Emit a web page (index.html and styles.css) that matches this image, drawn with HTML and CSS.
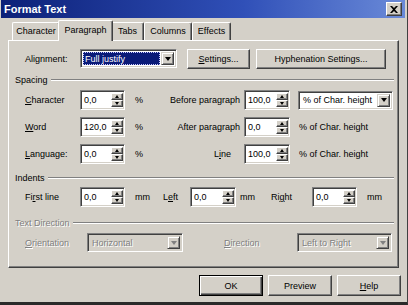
FILE: index.html
```html
<!DOCTYPE html>
<html>
<head>
<meta charset="utf-8">
<link rel="stylesheet" href="styles.css">
</head>
<body>
<div class="dialog">
  <div class="titlebar">
    <span class="title">Format Text</span>
    <span class="close"><svg width="8" height="7" viewBox="0 0 8 7"><path d="M0 0h2l2 2 2-2h2L5 3.5 8 7H6L4 5 2 7H0l3-3.5z" fill="#000"/></svg></span>
  </div>
  <div class="tabs">
    <div class="tab w-char">Character</div>
    <div class="tab active w-para">Paragraph</div>
    <div class="tab w-tabs">Tabs</div>
    <div class="tab w-cols">Columns</div>
    <div class="tab w-eff">Effects</div>
  </div>
  <div class="panel">
    <div class="row align-row">
      <span class="lbl c-label">Ali<u>g</u>nment:</span>
      <div class="combo w-align">
        <span class="combo-text selected"><span>Full justify</span></span>
        <span class="arrow-btn"><span class="tri"></span></span>
      </div>
      <button class="btn w-settings"><u>S</u>ettings...</button>
      <button class="btn w-hyph">Hyphenation Settings...</button>
    </div>

    <div class="group-head"><span>Spacing</span><span class="etch"></span></div>

    <div class="row spacing-row first">
      <span class="lbl c-label"><u>C</u>haracter</span>
      <div class="spin w45"><span class="spin-text">0,0</span><span class="spin-btns"><span class="sb"><span class="up"></span></span><span class="sb"><span class="down"></span></span></span></div>
      <span class="lbl c-unit">%</span>
      <span class="lbl c-label2">Before paragraph</span>
      <div class="spin w46"><span class="spin-text">100,0</span><span class="spin-btns"><span class="sb"><span class="up"></span></span><span class="sb"><span class="down"></span></span></span></div>
      <div class="combo w-unit gap8">
        <span class="combo-text">% of Char. height</span>
        <span class="arrow-btn"><span class="tri"></span></span>
      </div>
    </div>

    <div class="row spacing-row">
      <span class="lbl c-label"><u>W</u>ord</span>
      <div class="spin w45"><span class="spin-text">120,0</span><span class="spin-btns"><span class="sb"><span class="up"></span></span><span class="sb"><span class="down"></span></span></span></div>
      <span class="lbl c-unit">%</span>
      <span class="lbl c-label2">After paragraph</span>
      <div class="spin w46"><span class="spin-text">0,0</span><span class="spin-btns"><span class="sb"><span class="up"></span></span><span class="sb"><span class="down"></span></span></span></div>
      <span class="lbl c-unittext">% of Char. height</span>
    </div>

    <div class="row spacing-row">
      <span class="lbl c-label"><u>L</u>anguage:</span>
      <div class="spin w45"><span class="spin-text">0,0</span><span class="spin-btns"><span class="sb"><span class="up"></span></span><span class="sb"><span class="down"></span></span></span></div>
      <span class="lbl c-unit">%</span>
      <span class="lbl c-label2 line-lbl">L<u>i</u>ne</span>
      <div class="spin w46"><span class="spin-text">100,0</span><span class="spin-btns"><span class="sb"><span class="up"></span></span><span class="sb"><span class="down"></span></span></span></div>
      <span class="lbl c-unittext">% of Char. height</span>
    </div>

    <div class="group-head indents-head"><span>Indents</span><span class="etch"></span></div>

    <div class="row indent-row">
      <span class="lbl c-label">Fi<u>r</u>st line</span>
      <div class="spin w45"><span class="spin-text">0,0</span><span class="spin-btns"><span class="sb"><span class="up"></span></span><span class="sb"><span class="down"></span></span></span></div>
      <span class="lbl i-mm1">mm</span>
      <span class="lbl i-left">L<u>e</u>ft</span>
      <div class="spin w46"><span class="spin-text">0,0</span><span class="spin-btns"><span class="sb"><span class="up"></span></span><span class="sb"><span class="down"></span></span></span></div>
      <span class="lbl i-mm2">mm</span>
      <span class="lbl i-right">Ri<u>g</u>ht</span>
      <div class="spin w45"><span class="spin-text">0,0</span><span class="spin-btns"><span class="sb"><span class="up"></span></span><span class="sb"><span class="down"></span></span></span></div>
      <span class="lbl i-mm3">mm</span>
    </div>

    <div class="group-head td-head disabled"><span>Text Direction</span><span class="etch"></span></div>

    <div class="row orient-row">
      <span class="lbl o-label disabled"><u>O</u>rientation</span>
      <div class="combo dis w-orient">
        <span class="combo-text disabled">Horizontal</span>
        <span class="arrow-btn"><span class="tri dis-tri"></span></span>
      </div>
      <span class="lbl o-dir disabled"><u>D</u>irection</span>
      <div class="combo dis w-unit">
        <span class="combo-text disabled">Left to Right</span>
        <span class="arrow-btn"><span class="tri dis-tri"></span></span>
      </div>
    </div>
  </div>
  <div class="buttons">
    <button class="btn dlg default">OK</button>
    <button class="btn dlg">Preview</button>
    <button class="btn dlg"><u>H</u>elp</button>
  </div>
</div>
</body>
</html>
```

FILE: styles.css
```css
* { box-sizing: border-box; }

html, body {
  margin: 0;
  padding: 0;
}

body {
  width: 408px;
  height: 305px;
  overflow: hidden;
  background: #d4d0c8;
  font-family: "Liberation Sans", Arial, sans-serif;
  font-size: 9px;
  color: #000;
}

u { text-decoration: underline; text-underline-offset: 1px; }

.dialog {
  width: 408px;
  height: 305px;
  background: #d4d0c8;
  padding: 0 2px 0 1px;
  border-right: 1px solid #404040;
  border-bottom: 3px solid #2a2a2a;
  display: flex;
  flex-direction: column;
}

.titlebar {
  height: 18px;
  flex: none;
  background: linear-gradient(to right, #0c2078, #3050b8 60%, #6a8ad8);
  display: flex;
  align-items: center;
  justify-content: space-between;
  padding: 0 3px 0 3px;
}

.title {
  color: #fff;
  font-weight: bold;
  font-size: 11px;
}

.close {
  width: 16px;
  height: 14px;
  background: #d4d0c8;
  border: 1px solid;
  border-color: #fff #404040 #404040 #fff;
  box-shadow: inset -1px -1px #808080;
  display: flex;
  align-items: center;
  justify-content: center;
}

.tabs {
  display: flex;
  align-items: flex-end;
  height: 20px;
  margin-top: 2px;
  padding-left: 11px;
  flex: none;
}

.tab {
  height: 18px;
  line-height: 16px;
  text-align: center;
  border-top: 1px solid #fff;
  border-left: 1px solid #fff;
  border-right: 1px solid #404040;
  box-shadow: inset -1px 0 #808080;
  border-radius: 2px 2px 0 0;
  background: #d4d0c8;
  white-space: nowrap;
}

.tab.active {
  height: 21px;
  margin: 0 -2px -1px -2px;
  line-height: 18px;
  position: relative;
  z-index: 1;
}

.w-char { width: 48px; }
.w-para { width: 55px; }
.w-tabs { width: 33px; }
.w-cols { width: 48px; }
.w-eff { width: 39px; }

.panel {
  flex: none;
  margin-left: 7px;
  width: 391px;
  height: 228px;
  border: 1px solid;
  border-color: #fff #404040 #404040 #fff;
  box-shadow: inset -1px -1px #808080;
  display: flex;
  flex-direction: column;
  padding-left: 16px;
}

.row {
  display: flex;
  align-items: center;
  height: 20px;
  flex: none;
}

.lbl { white-space: nowrap; flex: none; }

.align-row { margin-top: 8px; height: 19px; }
.c-label { width: 55px; }

.combo {
  flex: none;
  height: 19px;
  display: flex;
  align-items: stretch;
  background: #fff;
  border: 1px solid;
  border-color: #808080 #fff #fff #808080;
  box-shadow: inset 1px 1px #404040, inset -1px -1px #d4d0c8;
  padding: 2px;
}

.combo.dis { background: #d4d0c8; }

.combo-text {
  flex: 1;
  display: flex;
  align-items: center;
  padding-left: 2px;
  white-space: nowrap;
  overflow: hidden;
}

.combo-text.selected {
  padding: 0 1px 0 0;
}

.combo-text.selected span {
  flex: 1;
  height: 100%;
  background: #0a1a78;
  color: #fff;
  display: flex;
  align-items: center;
  padding-left: 2px;
  outline: 1px dotted #c8c8ff;
  outline-offset: -1px;
}

.arrow-btn {
  flex: none;
  width: 13px;
  background: #d4d0c8;
  border: 1px solid;
  border-color: #d4d0c8 #404040 #404040 #d4d0c8;
  box-shadow: inset 1px 1px #fff, inset -1px -1px #808080;
  display: flex;
  align-items: center;
  justify-content: center;
}

.tri {
  width: 0;
  height: 0;
  border-left: 3.5px solid transparent;
  border-right: 3.5px solid transparent;
  border-top: 4px solid #000;
}

.tri.dis-tri { border-top-color: #808080; }

.w-align { width: 97px; }
.w-unit { width: 95px; }
.gap8 { margin-left: 8px; }
.w-orient { width: 96px; }

.btn {
  flex: none;
  font: inherit;
  color: #000;
  background: #d4d0c8;
  border: 1px solid;
  border-color: #fff #404040 #404040 #fff;
  box-shadow: inset -1px -1px #808080;
  padding: 0;
  height: 20px;
  white-space: nowrap;
}

.w-settings { width: 63px; margin-left: 10px; }
.w-hyph { width: 130px; margin-left: 6px; }

.group-head {
  display: flex;
  align-items: center;
  height: 12px;
  margin-left: -10px;
  margin-top: 6px;
  margin-right: 4px;
  flex: none;
}

.etch {
  flex: 1;
  height: 2px;
  margin-left: 3px;
  border-top: 1px solid #808080;
  border-bottom: 1px solid #fff;
}

.spacing-row { margin-top: 7px; }
.spacing-row.first { margin-top: 4px; }

.spin {
  flex: none;
  height: 20px;
  display: flex;
  background: #fff;
  border: 1px solid;
  border-color: #808080 #fff #fff #808080;
  box-shadow: inset 1px 1px #404040, inset -1px -1px #d4d0c8;
  padding: 2px 1px 2px 2px;
}

.w45 { width: 45px; }
.w46 { width: 46px; }

.spin-text {
  flex: 1;
  display: flex;
  align-items: center;
  padding-left: 1px;
  white-space: nowrap;
}

.spin-btns {
  flex: none;
  width: 12px;
  display: flex;
  flex-direction: column;
}

.sb {
  flex: 1;
  background: #d4d0c8;
  border: 1px solid;
  border-color: #fff #404040 #404040 #fff;
  box-shadow: inset -1px -1px #808080;
  display: flex;
  align-items: center;
  justify-content: center;
}

.up {
  width: 0; height: 0;
  border-left: 2.5px solid transparent;
  border-right: 2.5px solid transparent;
  border-bottom: 3px solid #000;
}

.down {
  width: 0; height: 0;
  border-left: 2.5px solid transparent;
  border-right: 2.5px solid transparent;
  border-top: 3px solid #000;
}

.c-unit { width: 25px; padding-left: 10px; }
.c-label2 { width: 94px; text-align: right; padding-right: 4px; }
.c-label2.line-lbl { padding-right: 13px; }
.c-unittext { margin-left: 9px; }

.indents-head { margin-top: 8px; }
.indent-row { margin-top: 3px; }
.i-mm1 { width: 38px; padding-left: 10px; }
.i-left { width: 27px; }
.i-mm2 { width: 35px; padding-left: 4px; }
.i-right { width: 41px; }
.i-mm3 { padding-left: 10px; }

.td-head { margin-top: 10px; }
.orient-row { margin-top: 4px; height: 19px; }
.o-label { width: 62px; }
.o-dir { width: 73px; margin-left: 41px; }

.disabled {
  color: #808080;
  text-shadow: 1px 1px 0 #fff;
}

.buttons {
  display: flex;
  justify-content: flex-end;
  gap: 5px;
  margin-top: 7px;
  padding-right: 4px;
  flex: none;
}

.btn.dlg { width: 64px; height: 21px; }

.btn.default {
  border: 1px solid #000;
  box-shadow: inset 1px 1px #fff, inset -1px -1px #404040, inset -2px -2px #808080;
}
```
